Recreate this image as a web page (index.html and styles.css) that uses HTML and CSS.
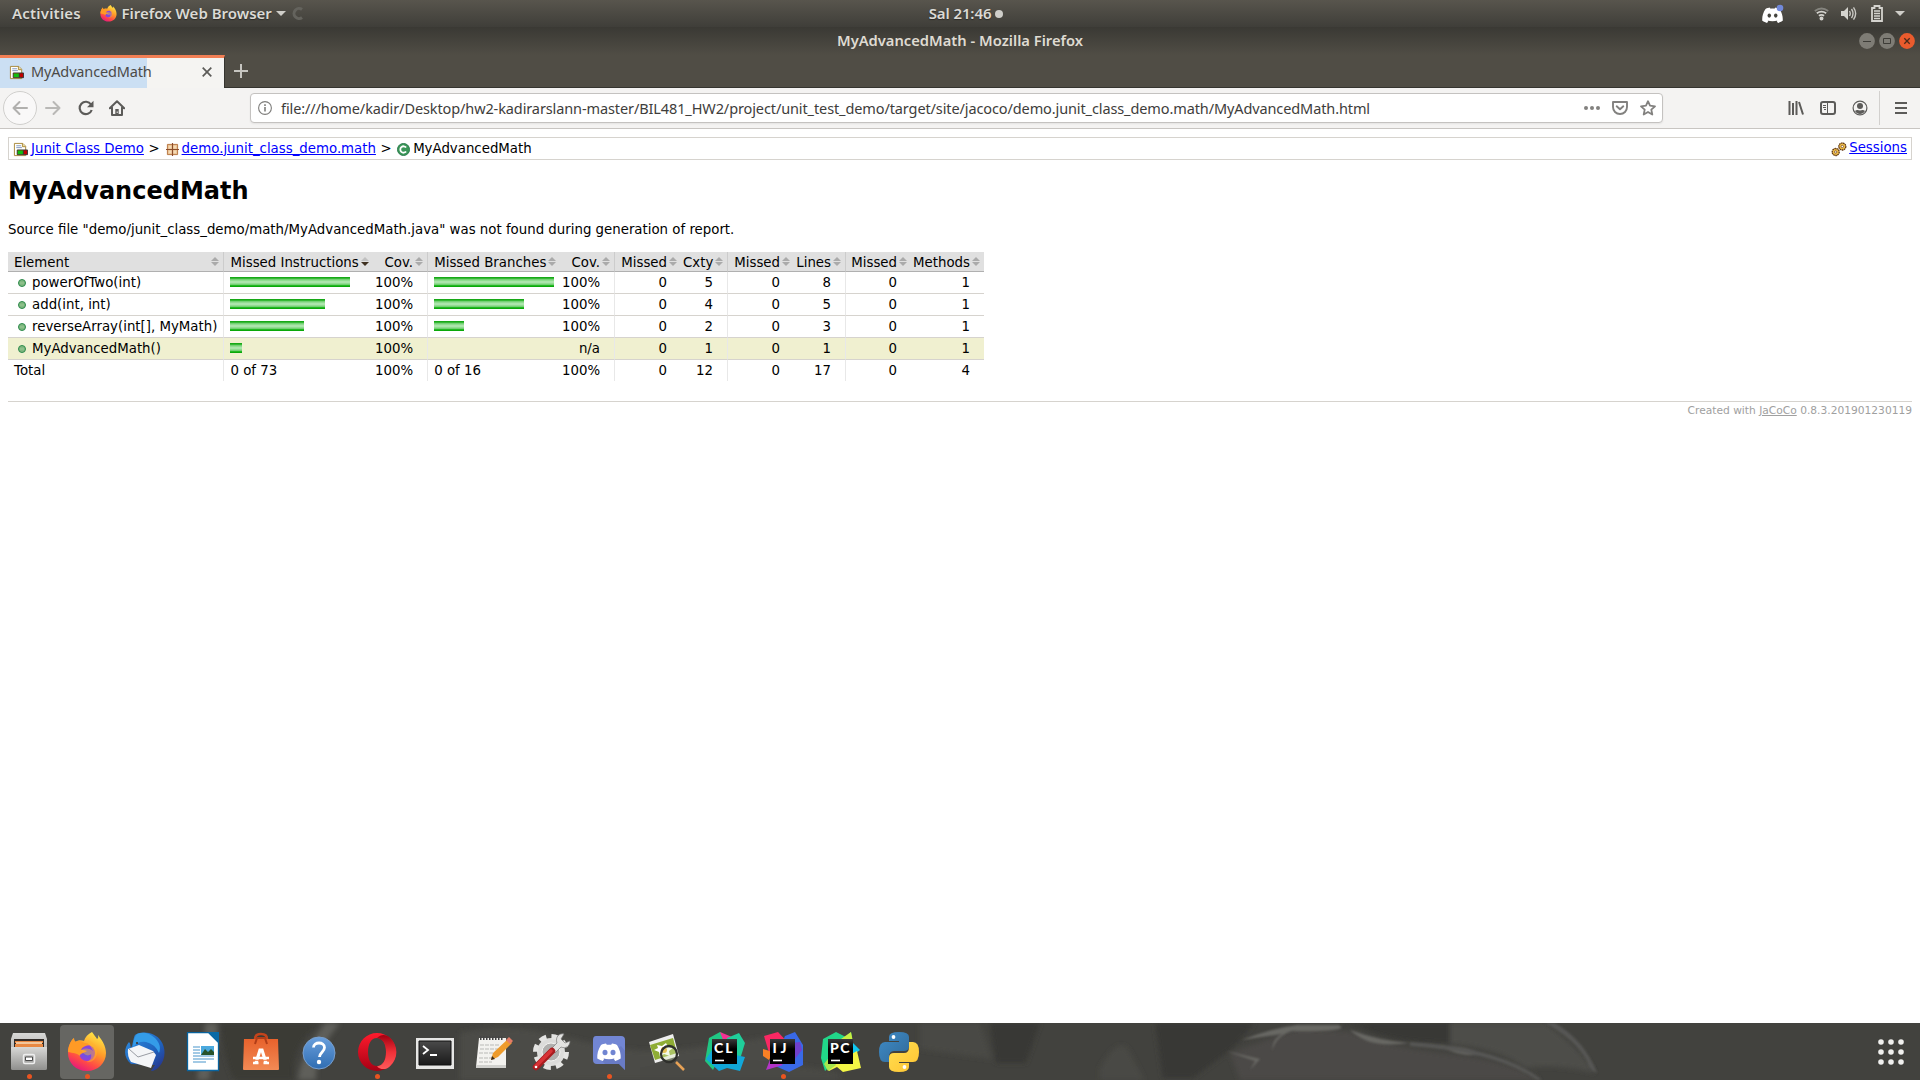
FILE: index.html
```html
<!DOCTYPE html>
<html lang="en">
<head>
<meta charset="utf-8">
<title>MyAdvancedMath</title>
<link rel="stylesheet" href="styles.css">
</head>
<body>
<svg class="defs" width="0" height="0">
  <defs>
    <linearGradient id="fox" x1="0.8" y1="0" x2="0.3" y2="1"><stop offset="0" stop-color="#fff04a"/><stop offset=".45" stop-color="#ff9a28"/><stop offset=".75" stop-color="#ff4a46"/><stop offset="1" stop-color="#e5177e"/></linearGradient>
    <radialGradient id="globe"><stop offset="0" stop-color="#5b5be8"/><stop offset="1" stop-color="#9440d8"/></radialGradient>
    <linearGradient id="metal" x1="0" y1="0" x2="0" y2="1"><stop offset="0" stop-color="#d8d8d6"/><stop offset="1" stop-color="#8f8f8d"/></linearGradient>
    <linearGradient id="bird" x1="0" y1="0" x2="1" y2="1"><stop offset="0" stop-color="#2f8fe0"/><stop offset=".6" stop-color="#1f62bd"/><stop offset="1" stop-color="#2a2a80"/></linearGradient>
    <linearGradient id="bag" x1="0" y1="0" x2="0" y2="1"><stop offset="0" stop-color="#e8622c"/><stop offset="1" stop-color="#f28a55"/></linearGradient>
    <linearGradient id="help" x1="0" y1="0" x2="0" y2="1"><stop offset="0" stop-color="#6a9fdc"/><stop offset="1" stop-color="#2f6db2"/></linearGradient>
    <linearGradient id="opera" x1="0" y1="0" x2="0" y2="1"><stop offset="0" stop-color="#ff1b2d"/><stop offset="1" stop-color="#a70014"/></linearGradient>
    <linearGradient id="opera2" x1="0" y1="0" x2="0" y2="1"><stop offset="0" stop-color="#a00010"/><stop offset=".5" stop-color="#f03038"/><stop offset="1" stop-color="#ff5a5a"/></linearGradient>
    <linearGradient id="screen" x1="0" y1="0" x2="0" y2="1"><stop offset="0" stop-color="#4a4a4a"/><stop offset="1" stop-color="#1a1a1a"/></linearGradient>
    <linearGradient id="square" x1="0" y1="0" x2="0" y2="1"><stop offset="0" stop-color="#3a3a3a"/><stop offset=".4" stop-color="#000"/></linearGradient>
    <linearGradient id="pyb" x1="0" y1="0" x2="1" y2="1"><stop offset="0" stop-color="#3f8cc8"/><stop offset="1" stop-color="#306998"/></linearGradient>
    <linearGradient id="pyy" x1="0" y1="0" x2="1" y2="1"><stop offset="0" stop-color="#ffe052"/><stop offset="1" stop-color="#ffc331"/></linearGradient>
    <filter id="soft"><feGaussianBlur stdDeviation="2.5"/></filter>
    <filter id="glow"><feGaussianBlur stdDeviation="0.9"/></filter>
    <symbol id="firefox" viewBox="0 0 40 40">
      <path d="M25 0c2 3 4 5 5 7 2-1 1-3 1-4 4 5 8 11 8 18 0 10-8 18-19 18S1 31 1 21C1 15 3 9 7 6c0 2 0 3 1 4 3-2 6-2 9-1 1-4 4-7 8-9Z" fill="url(#fox)"/>
      <circle cx="20" cy="21" r="8" fill="url(#globe)"/>
      <path d="M1 20C1 14 4 9 7 6c0 2 1 3 2 4 3-2 6-1 8 1 2 0 4 0 5 2-4 1-7 2-8 5 2 0 4 0 6 1-3 2-7 2-7 5-3-3-7-3-12-4Z" fill="#ff9a25"/>
      <path d="M14 18c4-2 8-2 12 1-2-5-6-8-5-11 5 2 9 6 9 12 0 7-5 11-11 10 4-1 6-4 5-8-3 3-7 1-10-4Z" fill="#ffb42e" opacity=".45"/>
    </symbol>
    <symbol id="report" viewBox="0 0 16 16">
      <path d="M1.500 1.500h9l3 3v10h-12z" fill="#fff" stroke="#a88838"/><path d="M10 1.500v3.500h3.500" fill="#efdf9e" stroke="#a88838"/>
      <path d="M3.500 4h5M3.500 6h6" stroke="#7d95bd"/>
      <path d="M4.500 8.500h11v5h-11z" fill="#c00000" stroke="#333"/><path d="M5 9h6v4H5z" fill="#10c010"/><path d="M11 9v4" stroke="#333"/>
    </symbol>
    <symbol id="discord" viewBox="0 0 24 18"><path d="M4 2C6 1 7 .7 9 .5l.8 1.300c1.500-.2 3-.2 4.400 0L15 .5c2 .2 3 .5 5 1.500 3 4.500 4 9 3.700 13.500-2 1.300-3.700 2-5.500 2.500l-1.500-2.300 1.500-.7c-4 1.700-8.400 1.700-12.400 0l1.500.7L5.800 18C4 17.500 2.300 16.800.3 15.500 0 11 1 6.500 4 2Z" fill="#fff"/></symbol>
    <symbol id="method" viewBox="0 0 8 8"><circle cx="4" cy="4" r="3.500" fill="#80b880" stroke="#2c8a4c"/><path d="M2 4h4" stroke="#9cc896"/></symbol>
  </defs>
</svg>

<header class="topbar">
  <div class="top-left">
    <span class="activities">Activities</span>
    <svg class="fox-small" width="17" height="17"><use href="#firefox"/></svg>
    <span class="app-name">Firefox Web Browser</span>
    <i class="caret"></i>
    <svg class="spinner" width="13" height="13" viewBox="0 0 13 13"><path d="M10 2.500A5 5 0 1 0 10 10.500" fill="none" stroke="#64635d" stroke-width="3"/></svg>
  </div>
  <div class="clock"><span>Sal 21:46</span><i class="dot"></i></div>
  <div class="tray">
    <svg class="tray-discord" width="22" height="20" viewBox="0 0 22 20"><svg y="3" width="21" height="16" viewBox="0 0 24 18"><use href="#discord" width="24" height="18"/><ellipse cx="8.300" cy="9.700" rx="2" ry="2.300" fill="#45443f"/><ellipse cx="15.700" cy="9.700" rx="2" ry="2.300" fill="#45443f"/></svg><circle cx="18" cy="4" r="3.300" fill="#7289da"/></svg>
    <svg class="tray-wifi" width="15" height="15" viewBox="0 0 15 15" fill="none" stroke="#d4d3ce" stroke-width="1.800"><path d="M.8 5Q7.500 0 14.200 5" stroke="#85847e"/><path d="M2.800 7.300q4.700-3.200 9.400 0M4.900 9.700q2.600-1.800 5.200 0"/><circle cx="7.500" cy="12.600" r="1.100" fill="#d4d3ce"/></svg>
    <svg class="tray-sound" width="17" height="15" viewBox="0 0 17 15"><path d="M1 5h3l4-4v13l-4-4H1z" fill="#d4d3ce"/><path d="M9.500 5q1.500 2.500 0 5M11.500 3q3 4.500 0 9M13.500 1.300q4.300 6.200 0 12.400" fill="none" stroke="#c9c8c3" stroke-width="1.400"/></svg>
    <svg class="tray-battery" width="12" height="17" viewBox="0 0 12 17"><path d="M1 3h2.500V1h5v2H11v13H1z" fill="none" stroke="#d4d3ce" stroke-width="1.800"/><path d="M3 6h6M3 8.500h6M3 11h6M3 13.500h6" stroke="#d4d3ce" stroke-width="1.400"/></svg>
    <i class="caret"></i>
  </div>
</header>

<div class="titlebar">
  <span class="window-title">MyAdvancedMath - Mozilla Firefox</span>
  <div class="window-buttons">
    <svg width="16" height="16"><circle cx="8" cy="8" r="7.900" fill="#7e7c75"/><path d="M4 8.500h8" stroke="#3d3c37"/></svg>
    <svg width="16" height="16"><circle cx="8" cy="8" r="7.900" fill="#7e7c75"/><path d="M4.500 5.500h7v5h-7z" fill="none" stroke="#3d3c37"/></svg>
    <svg width="16" height="16"><circle cx="8" cy="8" r="7.900" fill="#ea5b2d"/><path d="m5.300 5.300 5.400 5.400m0-5.400-5.400 5.400" stroke="#4b2a1a" stroke-width="1.300"/></svg>
  </div>
</div>

<div class="tabs">
  <div class="tab">
    <svg width="15" height="15"><use href="#report"/></svg>
    <span class="tab-title">MyAdvancedMath</span>
    <svg class="tab-close" width="10" height="10" viewBox="0 0 10 10"><path d="m.7.700 8.600 8.600m0-8.600L.7 9.300" stroke="#5c5b58" stroke-width="1.700"/></svg>
  </div>
  <svg class="new-tab" width="14" height="14"><path d="M7 0v14M0 7h14" stroke="#c6c5c0" stroke-width="2"/></svg>
</div>

<nav class="toolbar">
  <div class="nav-buttons">
    <span class="back"><svg width="16" height="16" viewBox="0 0 16 16" fill="none" stroke="#b1b0ae" stroke-width="2" stroke-linecap="round" stroke-linejoin="round"><path d="M15 8H1.500M7.500 2l-6 6 6 6"/></svg></span>
    <svg class="forward" width="16" height="16" viewBox="0 0 16 16" fill="none" stroke="#b9b8b6" stroke-width="2" stroke-linecap="round" stroke-linejoin="round"><path d="M1 8h13.500M8.500 2l6 6-6 6"/></svg>
    <svg class="reload" width="16" height="16" viewBox="0 0 16 16"><path d="M13 4.500A6.200 6.200 0 1 0 13.700 10" fill="none" stroke="#5c5b59" stroke-width="2.200"/><path d="M15.500.8v6.400H9z" fill="#5c5b59"/></svg>
    <svg class="home" width="16" height="16" viewBox="0 0 16 16"><path d="M.8 8.300 8 1.300l7.200 7M3 7.500V15h10V7.500" fill="none" stroke="#5c5b59" stroke-width="2" stroke-linecap="round" stroke-linejoin="round"/><path d="M6.300 9h3.400v6H6.300z" fill="#5c5b59"/><path d="M7.700 11.500h1v1.500h-1z" fill="#f3f2f1"/></svg>
  </div>
  <div class="urlbar">
    <svg width="14" height="14" viewBox="0 0 14 14"><circle cx="7" cy="7" r="6.400" fill="none" stroke="#7e7d7b" stroke-width="1.100"/><path d="M7 6v4.500M7 3.300V5" stroke="#7e7d7b" stroke-width="1.600"/></svg>
    <span class="url">file:///home/kadir/Desktop/hw2-kadirarslann-master/BIL481_HW2/project/unit_test_demo/target/site/jacoco/demo.junit_class_demo.math/MyAdvancedMath.html</span>
    <div class="page-actions">
      <svg width="16" height="16" fill="#82817f"><circle cx="2" cy="8" r="2"/><circle cx="8" cy="8" r="2"/><circle cx="14" cy="8" r="2"/></svg>
      <svg width="16" height="16" viewBox="0 0 16 16" fill="none" stroke="#82817f" stroke-width="1.900" stroke-linejoin="round"><path d="M1 2h14v5c0 4-3 7-7 7s-7-3-7-7z"/><path d="m4.700 6.300 3.300 3 3.300-3" stroke-linecap="round"/></svg>
      <svg width="16" height="16" viewBox="0 0 16 16"><path d="m8 1.200 2 4.500 5 .6-3.700 3.300 1 4.900L8 12l-4.300 2.500 1-4.900L1 6.300l5-.6z" fill="none" stroke="#82817f" stroke-width="1.800" stroke-linejoin="round"/></svg>
    </div>
  </div>
  <div class="tools">
    <svg width="16" height="16" viewBox="0 0 16 16" stroke="#5c5b59" stroke-width="2"><path d="M1.500 1v14M5 3v12M8.500 1v14M11 2l4 12.500" /></svg>
    <svg width="16" height="16" viewBox="0 0 16 16"><rect x="1" y="2" width="14" height="12" rx="2" fill="none" stroke="#5c5b59" stroke-width="2"/><path d="M7.500 2v12M3 5.500h3M3 7.500h3M4 9.500h2" stroke="#5c5b59"/></svg>
    <svg width="16" height="16" viewBox="0 0 16 16"><circle cx="8" cy="8" r="6.900" fill="none" stroke="#5c5b59" stroke-width="1.200"/><circle cx="8" cy="6" r="3" fill="#5c5b59"/><path d="M3 11c2-1.500 3-1 5-.5 2-.5 3-1 5 .5-1 2-3 3-5 3s-4-1-5-3Z" fill="#5c5b59"/></svg>
    <i class="divider"></i>
    <svg width="12" height="14"><path d="M0 2h12M0 7h12M0 12h12" stroke="#5c5b59" stroke-width="2"/></svg>
  </div>
</nav>

<main class="page">
  <div class="breadcrumb">
    <svg class="crumb-icon" width="15" height="15"><use href="#report"/></svg><a class="crumb-report">Junit Class Demo</a>
    <span class="sep">&gt;</span>
    <svg class="crumb-package" width="13" height="13" viewBox="0 0 14 14"><path d="M1.500 1.500h11v11h-11z" fill="#eac18f" stroke="#b4713c"/><path d="M3 3h3v3H3zM8 3h3v3H8zM3 8h3v3H3zM8 8h3v3H8z" fill="#f4dab6"/><path d="M7 0v14M0 7h14" stroke="#8b4c2a" stroke-width="1.200"/></svg><a class="crumb-name">demo.junit_class_demo.math</a>
    <span class="sep">&gt;</span>
    <svg class="crumb-class" width="13" height="13" viewBox="0 0 14 14"><circle cx="7" cy="7" r="6.500" fill="#3a9658" stroke="#27784a"/><path d="M9.800 4.800a3.500 3.500 0 1 0 0 4.400" fill="none" stroke="#fff" stroke-width="1.900"/></svg><span>MyAdvancedMath</span>
    <span class="session"><svg width="16" height="16" viewBox="0 0 16 16"><g fill="#f2c14a" stroke="#5f3512"><circle cx="4.700" cy="11" r="3.500" stroke-dasharray="1.600 .5" stroke-width="1.300"/><circle cx="11.300" cy="5.500" r="3.500" stroke-dasharray="1.600 .5" stroke-width="1.300"/></g><circle cx="4.700" cy="11" r="1.200" fill="#fff" stroke="#6b3b12" stroke-width=".7"/><circle cx="11.300" cy="5.500" r="1.200" fill="#fff" stroke="#6b3b12" stroke-width=".7"/></svg><a>Sessions</a></span>
  </div>
  <h1>MyAdvancedMath</h1>
  <p class="notice">Source file "demo/junit_class_demo/math/MyAdvancedMath.java" was not found during generation of report.</p>
  <table class="coverage">
    <colgroup><col class="w-element"><col class="w-instr"><col class="w-cov"><col class="w-branch"><col class="w-cov"><col class="w-missed"><col class="w-cxty"><col class="w-missed"><col class="w-lines"><col class="w-missed-methods"><col class="w-methods"></colgroup>
    <thead><tr><td>Element</td><td class="bar down">Missed Instructions</td><td class="ctr2">Cov.</td><td class="bar">Missed Branches</td><td class="ctr2">Cov.</td><td class="ctr1">Missed</td><td class="ctr2">Cxty</td><td class="ctr1">Missed</td><td class="ctr2">Lines</td><td class="ctr1">Missed</td><td class="ctr2">Methods</td></tr></thead>
    <tbody>
      <tr><td><span class="el"><svg width="8" height="8"><use href="#method"/></svg>powerOfTwo(int)</span></td><td class="bar"><i class="green" style="width:120px"></i></td><td class="ctr2">100%</td><td class="bar"><i class="green" style="width:120px"></i></td><td class="ctr2">100%</td><td class="ctr1">0</td><td class="ctr2">5</td><td class="ctr1">0</td><td class="ctr2">8</td><td class="ctr1">0</td><td class="ctr2">1</td></tr>
      <tr><td><span class="el"><svg width="8" height="8"><use href="#method"/></svg>add(int, int)</span></td><td class="bar"><i class="green" style="width:95px"></i></td><td class="ctr2">100%</td><td class="bar"><i class="green" style="width:90px"></i></td><td class="ctr2">100%</td><td class="ctr1">0</td><td class="ctr2">4</td><td class="ctr1">0</td><td class="ctr2">5</td><td class="ctr1">0</td><td class="ctr2">1</td></tr>
      <tr><td><span class="el"><svg width="8" height="8"><use href="#method"/></svg>reverseArray(int[], MyMath)</span></td><td class="bar"><i class="green" style="width:74px"></i></td><td class="ctr2">100%</td><td class="bar"><i class="green" style="width:30px"></i></td><td class="ctr2">100%</td><td class="ctr1">0</td><td class="ctr2">2</td><td class="ctr1">0</td><td class="ctr2">3</td><td class="ctr1">0</td><td class="ctr2">1</td></tr>
      <tr class="hovered"><td><span class="el"><svg width="8" height="8"><use href="#method"/></svg>MyAdvancedMath()</span></td><td class="bar"><i class="green" style="width:12px"></i></td><td class="ctr2">100%</td><td class="bar"></td><td class="ctr2">n/a</td><td class="ctr1">0</td><td class="ctr2">1</td><td class="ctr1">0</td><td class="ctr2">1</td><td class="ctr1">0</td><td class="ctr2">1</td></tr>
    </tbody>
    <tfoot><tr><td>Total</td><td class="bar">0 of 73</td><td class="ctr2">100%</td><td class="bar">0 of 16</td><td class="ctr2">100%</td><td class="ctr1">0</td><td class="ctr2">12</td><td class="ctr1">0</td><td class="ctr2">17</td><td class="ctr1">0</td><td class="ctr2">4</td></tr></tfoot>
  </table>
  <div class="footer">Created with <a>JaCoCo</a> 0.8.3.201901230119</div>
</main>

<footer class="dock">
  <svg class="wallpaper" width="1920" height="57" viewBox="0 0 1920 57" preserveAspectRatio="none">
    <rect width="1920" height="57" fill="#42423e"/>
    <g filter="url(#soft)">
      <path d="M205 0h12c2 20-6 40-8 57h-12c2-20 8-40 8-57ZM325 0h15c-15 18-25 35-24 57h-18c2-22 15-40 27-57Z" fill="#5e5e5a"/>
      <path d="M220 0h100c-20 15-30 35-26 57h-60c-10-20-10-40-14-57Z" fill="#3a3a36"/>
      <path d="M460 10c60-14 100 5 150 14s90 0 160-10l20 43H460Z" fill="#4b4b47"/>
      <path d="M640 45q80-20 200 5v7H640ZM920 0h60l12 36-72-10Z" fill="#4a4a45"/>
      <path d="M990 0h50l-14 40h-30ZM1155 0h100l-22 25-40 30h-30Z" fill="#393935"/>
      <path d="M1100 45q20-35 30-15l14 27h-44Z" fill="#4a4a45"/>
      <path d="M1230 30 1300 5l50 4q40 15 90 21 70 7 100 27h-300Z" fill="#4b4a47"/>
      <path d="M1340 0h110v20q-60 0-90-16Z" fill="#383834"/><path d="M1450 0h95q35 25 50 50-40-10-70-5-25-20-75-24Z" fill="#4d4d4a"/>
    </g>
    <g filter="url(#glow)">
      <path d="M1242 17q30-12 55-15h42l3 3q-10 4-50 3-16 5-20 20 0-12 10-17-20 3-40 6ZM1350 7q30 11 60 13-30 4-45-3-10-5-15-10ZM1440 23q30 0 43 9-25 2-43-9ZM1226 28l34 8-10 11 5-9Z" fill="#686763"/>
      <path d="M1410 19q90 5 132 38h-5q-40-28-127-34ZM1545 0h10q30 18 42 50-8-3-10-12-12-22-42-38Z" fill="#575754"/>
    </g>
  </svg>
  <div class="launchers">
    <span class="app running"><svg width="40" height="40" viewBox="0 0 40 40"><path d="M4 1h32l2 6v29q0 2-2 2H4q-2 0-2-2V7z" fill="url(#metal)"/><path d="M5 7h30v9H5z" fill="#322c28"/><path d="M6 9h28v2H6zM6 12h28v4H6z" fill="#e88842"/><path d="M7 10h26v2H7z" fill="#f2c69b"/><path d="M2 15h36v21q0 2-2 2H4q-2 0-2-2z" fill="url(#metal)"/><rect x="14.500" y="22.500" width="11" height="9" rx="1.500" fill="none" stroke="#eee" stroke-width="1.500"/><path d="M16.500 25h7v3.500h-7z" fill="#fff" stroke="#4b4b4b"/></svg></span>
    <span class="app active running"><svg width="40" height="40"><use href="#firefox"/></svg></span>
    <span class="app"><svg width="40" height="40" viewBox="0 0 40 40"><path d="M10 3C18-2 31 1 36 9c5 7 5 19-2 26-2 2-5 4-8 4l4-6L6 32C-2 25-1 16 4 10c2 2 1 4 2 6 2-3 2-9 4-13Z" fill="url(#bird)"/><path d="M12 2q9-4 18 4 7 7 4 15-4-9-13-11-8-1-13 5 0-8 4-13Z" fill="#349ce8"/><path d="m3 17 11-4 14 6 3 4-5 13-20-6q-4-6-3-13Z" fill="#f4f5f7"/><path d="m4 17 9 8 16-5" fill="none" stroke="#999ca3"/><circle cx="12" cy="11" r="1" fill="#402d23"/></svg></span>
    <span class="app"><svg width="40" height="40" viewBox="0 0 40 40"><path d="M4.500.500h21l10 10v28h-31z" fill="#fff" stroke="#08639e" stroke-width="1.300"/><path d="M25 0h11v11z" fill="#0a6aa6"/><path d="M10 15h7M10 18h7M10 21h7M10 24h21M10 27h21M10 30h13" stroke="#4896cc" stroke-width="1.200"/><path d="M18 14h13v9H18z" fill="#4ba9de"/><path d="m18 23 4-6 3 3 3-3 3 3v3z" fill="#27532b"/></svg></span>
    <span class="app"><svg width="40" height="40" viewBox="0 0 40 40"><path d="M14 12V7q0-5 6-5t6 5v5" fill="none" stroke="#c4441c" stroke-width="2.500"/><path d="M3 7h34l1 30q0 1-1 1H3q-1 0-1-1z" fill="url(#bag)"/><path d="M14 12 16 6h8l2 6" fill="none" stroke="#b13d18" stroke-width="2"/><path d="m15 31 4-13h2l4 13" fill="none" stroke="#fff" stroke-width="3.200"/><path d="M12 26h16M12 31h5.500m5 0H28" stroke="#fff" stroke-width="2.400"/><path d="M13 28.300h14" stroke="#ee7d48"/></svg></span>
    <span class="app"><svg width="40" height="40" viewBox="0 0 40 40"><circle cx="20" cy="21" r="16" fill="url(#help)" stroke="#789fce"/><path d="M14.500 15.500c0-6 11-6 11 0 0 4.500-5 5-5 9.500" fill="none" stroke="#fff" stroke-width="2.800"/><circle cx="20" cy="30" r="2.200" fill="#fff"/></svg></span>
    <span class="app running"><svg width="40" height="40" viewBox="0 0 40 40"><path fill-rule="evenodd" d="M20 1a19 19 0 1 0 0 38 19 19 0 0 0 0-38Zm0 5c6 0 9 6 9 14s-3 14-9 14-9-6-9-14 3-14 9-14Z" fill="url(#opera)"/><path d="M20 6c4-4 9-4 13-.2a19 19 0 0 1 0 28.400c-4 3.800-9 3.800-13 .2 6-1 9-6 9-14.400S26 7 20 6Z" fill="url(#opera2)"/></svg></span>
    <span class="app"><svg width="40" height="40" viewBox="0 0 40 40"><path d="M1 6h38v31H1z" fill="#e7e7e5"/><path d="M4 9h32v24H4z" fill="url(#screen)" stroke="#101010"/><path d="m8 14 5 4-5 4M15 23h7" fill="none" stroke="#fff" stroke-width="1.800"/></svg></span>
    <span class="app"><svg width="40" height="40" viewBox="0 0 40 40"><path d="M6 6h27v29H3z" fill="#f3f2ef"/><path d="M3 33h30v3H3z" fill="#d0d0cd"/><path d="M7 13h20M7 17h18M6 21h16M6 26h16M6 30h13" stroke="#b9b9b6" stroke-dasharray="4 1"/><path d="M7 6h24" stroke="#444" stroke-width="4" stroke-dasharray="1.500 1.500"/><path d="m18 28 2-7L35 7l4 4-14 14z" fill="#ee9b2c"/><path d="m18 28 1-4 3 3z" fill="#3b2a19"/><path d="m33 8 3-3 4 4-3 3z" fill="#e37c67"/></svg></span>
    <span class="app"><svg width="40" height="40" viewBox="0 0 40 40"><circle cx="20" cy="20" r="14" fill="#dcdcda"/><circle cx="20" cy="20" r="15.500" fill="none" stroke="#e4e4e2" stroke-width="5" stroke-dasharray="7 5.170"/><circle cx="20" cy="20" r="9" fill="#b0b0ae" stroke="#f3f3f1"/><path d="m20 17 6-6c-2-6 2-10 7-9l-3 5 4 4 5-2c0 5-4 8-9 6l-6 6z" fill="#e2e2e0" stroke="#777" stroke-width=".7"/><path d="m5 35 16-16" stroke="#a91d20" stroke-width="6.500" stroke-linecap="round"/><path d="m5 34 15-15" stroke="#d83336" stroke-width="3.500" stroke-linecap="round"/><circle cx="5" cy="35" r="1.300" fill="#fff"/></svg></span>
    <span class="app running"><svg width="40" height="40" viewBox="0 0 40 40"><path d="M7 4h25q4 0 4 4v30l-6-6H8q-4 0-4-4V8q0-4 3-4Z" fill="#7286d4"/><path d="m12 28 20-14 4 5v19l-6-6H16z" fill="#5f70b5" opacity=".5"/><use href="#discord" x="8" y="11" width="24" height="18"/><ellipse cx="16" cy="20.500" rx="2.500" ry="2.800" fill="#7085d2"/><ellipse cx="24" cy="20.500" rx="2.500" ry="2.800" fill="#7085d2"/></svg></span>
    <span class="app"><svg width="40" height="40" viewBox="0 0 40 40"><path d="m2 10 24-8 6 22-24 7z" fill="#eee"/><path d="m3 13 23-7 4 15-22 7z" fill="#8fad35"/><path d="m10 13 5 1 4-3 2 4 5 1-4 3 1 5-6-2-4 3-1-5-5-2 4-2z" fill="#fff"/><circle cx="17" cy="18" r="3" fill="#eaa91f"/><circle cx="22" cy="22" r="8" fill="#dceebb" fill-opacity=".35" stroke="#2f302c" stroke-width="2.300"/><path d="m29 30 8 8" stroke="#e7a256" stroke-width="2.500"/></svg></span>
    <span class="app"><svg width="40" height="40" viewBox="0 0 40 40"><path d="M4 6 15 0l9 6L8 38 0 29z" fill="#20c783"/><path d="m15 0 12 5-7 8z" fill="#f43093"/><path d="M22 6 34 1l6 10-4 13H20z" fill="#1fce9a"/><path d="m1 27 6-9 33 7-5 14-13-3-8 3z" fill="#11a7d9"/><path d="M7 7h25v25H7z" fill="url(#square)"/><text class="badge" x="9" y="21" textLength="18.500">CL</text><path d="M10 28.500h9" stroke="#fff" stroke-width="1.600"/></svg></span>
    <span class="app running"><svg width="40" height="40" viewBox="0 0 40 40"><path d="M1 4 15 0l12 13L7 24z" fill="#fa2863"/><path d="m0 17 10 3-4 8-6-4z" fill="#f98025"/><path d="m22 4 10-4 8 13v20l-14 7-16-7z" fill="#3969e6"/><path d="m28 11 9-1 2 8-8 10z" fill="#7040cc"/><path d="M8 25 3 38l17-5z" fill="#b334c7"/><path d="M7 7h25v25H7z" fill="url(#square)"/><text class="badge" x="9.500" y="21" textLength="14">IJ</text><path d="M10 28.500h9" stroke="#fff" stroke-width="1.600"/></svg></span>
    <span class="app"><svg width="40" height="40" viewBox="0 0 40 40"><path d="m2 7 13-7 10 5 5-5 2 12-21 20-7 7-4-13z" fill="#21d789"/><path d="m20 7 10-7 2 10z" fill="#c8ef42"/><path d="m30 9 9 9-8 6z" fill="#10c6f0"/><path d="m5 35 20-10 11-6 4 17-18 4-6-5-8 4z" fill="#f3f645"/><path d="m3 32 7-9 5 10-8 6z" fill="#a7e64f"/><path d="M7 7h25v25H7z" fill="url(#square)"/><text class="badge" x="9" y="21" textLength="19.500">PC</text><path d="M10 28.500h9" stroke="#fff" stroke-width="1.600"/></svg></span>
    <span class="app"><svg width="40" height="40" viewBox="0 0 40 40"><path d="M20 0q10 0 10 5v9q0 5-5 5H15q-5 0-5 6v5H6q-6 0-6-10T6 10h14V9H10V5q0-5 10-5Z" fill="url(#pyb)"/><path d="M20 40q-10 0-10-5v-9q0-5 5-5h10q5 0 5-6v-5h4q6 0 6 10t-6 10H20v1h10v4q0 5-10 5Z" fill="url(#pyy)"/><circle cx="14.500" cy="5" r="1.900" fill="#fff"/><circle cx="25.500" cy="35" r="1.900" fill="#fff"/></svg></span>
  </div>
  <svg class="app-grid" width="26" height="26" viewBox="0 0 26 26" fill="#f0f0ee"><circle cx="3" cy="3" r="2.800"/><circle cx="13" cy="3" r="2.800"/><circle cx="23" cy="3" r="2.800"/><circle cx="3" cy="13" r="2.800"/><circle cx="13" cy="13" r="2.800"/><circle cx="23" cy="13" r="2.800"/><circle cx="3" cy="23" r="2.800"/><circle cx="13" cy="23" r="2.800"/><circle cx="23" cy="23" r="2.800"/></svg>
</footer>
</body>
</html>
```
FILE: styles.css
```css
* { box-sizing: border-box; }
body { margin: 0; width: 1920px; height: 1080px; overflow: hidden; display: flex; flex-direction: column; background: #fff; font-family: "Noto Sans", sans-serif; }
svg { display: block; flex: none; }
.defs { position: absolute; }

/* Desktop top bar */
.topbar { height: 27px; flex: none; display: grid; grid-template-columns: 1fr auto 1fr; align-items: center; background: linear-gradient(#58554d, #3f3e39); color: #dbdad5; font-size: 15px; font-weight: 600; line-height: 26px; text-shadow: 0 1px 1px #2b2a26; }
.top-left { display: flex; align-items: center; padding-left: 12px; white-space: nowrap; }
.activities { width: 88px; letter-spacing: 0.200px; }
.fox-small { margin-right: 5px; margin-left: -0.500px; }
.app-name { width: 150px; }
.caret { width: 0; height: 0; border: 5px solid transparent; border-top-color: #cfcec9; border-bottom: 0; }
.top-left .caret { margin-left: 4.500px; }
.spinner { margin-left: 6px; }
.clock { display: flex; align-items: center; gap: 4px; margin-left: 12px; }
.clock span, .activities, .app-name { margin-top: -1px; }
.clock span { letter-spacing: -0.100px; }
.dot { width: 8px; height: 8px; border-radius: 50%; background: #cfcec9; }
.tray { display: flex; align-items: center; justify-content: flex-end; padding-right: 15px; }
.tray-wifi { margin-left: 30px; }
.tray-sound { margin-left: 11px; }
.tray-battery { margin-left: 14px; }
.tray .caret { margin-left: 12px; }

/* Window frame */
.titlebar { height: 28px; flex: none; display: grid; grid-template-columns: 80px 1fr 80px; align-items: center; background: linear-gradient(#3a3934, #504d45); color: #dfdbd2; font-size: 14.730px; font-weight: 600; line-height: 20px; }
.window-title { grid-column: 2; text-align: center; margin-top: -2px; }
.window-buttons { display: flex; gap: 4px; justify-content: flex-end; padding-right: 5px; }
.tabs { height: 33px; flex: none; display: flex; align-items: center; background: #504d45; border-bottom: 1px solid #35342f; }
.tab { width: 225px; height: 33px; margin-bottom: -1px; padding: 0 12px 2px 9px; display: flex; align-items: center; border-top: 3px solid #f27f55; border-right: 1px solid #35342f; background: linear-gradient(90deg, #cbdff3 147px, #f5f4f2 147px); color: #4b4a47; font-size: 14.500px; letter-spacing: -0.150px; }
.tab-title { margin-left: 7px; margin-top: -2px; white-space: nowrap; }
.tab-close { margin-left: auto; }
.new-tab { margin-left: 9px; }

/* Navigation toolbar */
.toolbar { height: 41px; flex: none; display: flex; align-items: center; background: #f4f3f2; border-bottom: 1px solid #c8c5c2; }
.nav-buttons { width: 250px; display: flex; align-items: center; padding-left: 3px; }
.back { width: 34px; height: 34px; display: grid; place-items: center; border: 1px solid #d0cfcd; border-radius: 50%; background: #f9f8f8; }
.forward { margin-left: 8px; }
.reload { margin-left: 16.500px; }
.home { margin-left: 15.500px; }
.urlbar { width: 1413px; height: 30px; display: flex; align-items: center; padding: 0 6px 0 7px; border: 1px solid #c4c2c0; border-radius: 4px; background: #fff; color: #3e3d3b; font-size: 14.500px; box-shadow: 0 1px 2px #0001; }
.url { margin-left: 9px; white-space: nowrap; letter-spacing: -0.110px; }
.page-actions { margin-left: auto; display: flex; gap: 12px; }
.tools { margin-left: auto; padding-right: 13px; display: flex; align-items: center; gap: 16px; }
.divider { width: 1px; height: 34px; background: #d2d0ce; margin-left: -5px; margin-right: -1px; }

/* Coverage report */
.page { flex: 1; padding: 8px; font-family: "DejaVu Sans", sans-serif; font-size: 13.333px; color: #000; }
.page a { color: #00f; text-decoration: underline; }
.breadcrumb { height: 23px; display: flex; align-items: center; padding: 0 4px; border: 1px solid #d6d3ce; line-height: 16px; white-space: pre; }
.breadcrumb > svg { margin-top: 1px; }
.crumb-report { margin-left: 3px; }
.crumb-name { margin-left: 3px; }
.sep { margin: 0 6px 0 4.500px; }
.crumb-class { margin-left: -0.800px; }
.crumb-class + span { margin-left: 3.300px; }
.session { margin-left: auto; display: flex; gap: 2px; }
.session svg { margin-top: 1px; }
h1 { margin: 17px 0 16px; font-size: 24px; line-height: 28px; font-weight: bold; }
.notice { margin: 0; padding-top: 1px; line-height: 16px; }
.coverage { width: 976px; margin-top: 14px; table-layout: fixed; border-collapse: separate; border-spacing: 0; line-height: 16px; }
.w-element { width: 215px; } .w-instr { width: 150px; } .w-cov { width: 54px; } .w-branch { width: 133px; } .w-missed { width: 67px; } .w-cxty { width: 46px; } .w-lines { width: 51px; } .w-missed-methods { width: 66px; } .w-methods { width: 73px; }
td { height: 22px; padding: 0 6px; white-space: nowrap; vertical-align: middle; }
.ctr1, .ctr2 { text-align: right; padding: 0 14px 0 2px; }
.bar, .ctr1 { border-left: 1px solid #e8e8e8; }
.bar { padding-left: 6.200px; }
.down, tfoot td:nth-child(2) { padding-left: 6.500px; }
tbody td { border-bottom: 1px solid #d6d3ce; }
thead td { position: relative; height: 20px; padding-top: 2px; background: #e0e0e0; border-bottom: 1px solid #b0b0b0; }
thead .ctr1, thead .ctr2 { padding-top: 2px; }
thead .bar, thead .ctr1 { border-left-color: #ccc; }
thead td::before, thead td::after { content: ""; position: absolute; right: 4.500px; border: 4px solid transparent; }
thead td::before { top: 5px; border-top: 0; border-bottom-color: #aaa; }
thead td::after { top: 10px; border-bottom: 0; border-top-color: #aaa; }
thead .down::before { border-bottom-color: #c0c0c0; }
thead .down::after { border-top-color: #3f3020; }
.el { display: flex; align-items: center; gap: 6px; padding-left: 4px; }
.el svg { margin-top: 1px; }
.green { display: block; height: 10px; margin-top: -1px; margin-left: -0.200px; background: linear-gradient(#17a817 0 1px, #35b935 1px 2px, #74d074 2px 3px, #91dc91 3px 4px, #abe5ab 4px 6px, #91dc91 6px 7px, #74d074 7px 8px, #22b822 8px 9px, #0aa80a 9px); }
.hovered { background: #f0f0d0; }
tfoot td { height: 21px; }
.footer { margin-top: 20px; padding-top: 2px; border-top: 1px solid #d6d3ce; text-align: right; font-size: 10.667px; line-height: 13px; color: #a0a0a0; }
.footer a { color: #a0a0a0; }

/* Launcher dock */
.dock { position: relative; height: 57px; flex: none; display: flex; align-items: center; justify-content: space-between; padding: 0 16px 0 2px; }
.wallpaper { position: absolute; inset: 0; }
.launchers { position: relative; display: flex; gap: 4px; }
.app { position: relative; width: 54px; height: 54px; display: grid; place-items: center; border-radius: 4px; }
.active { background: #666662; }
.running::after { content: ""; position: absolute; left: 24.500px; bottom: 0; width: 5px; height: 5px; border-radius: 50%; background: #e95420; }
.badge { font: 900 14px Lato, sans-serif; fill: #fff; }
.app-grid { position: relative; }
```
